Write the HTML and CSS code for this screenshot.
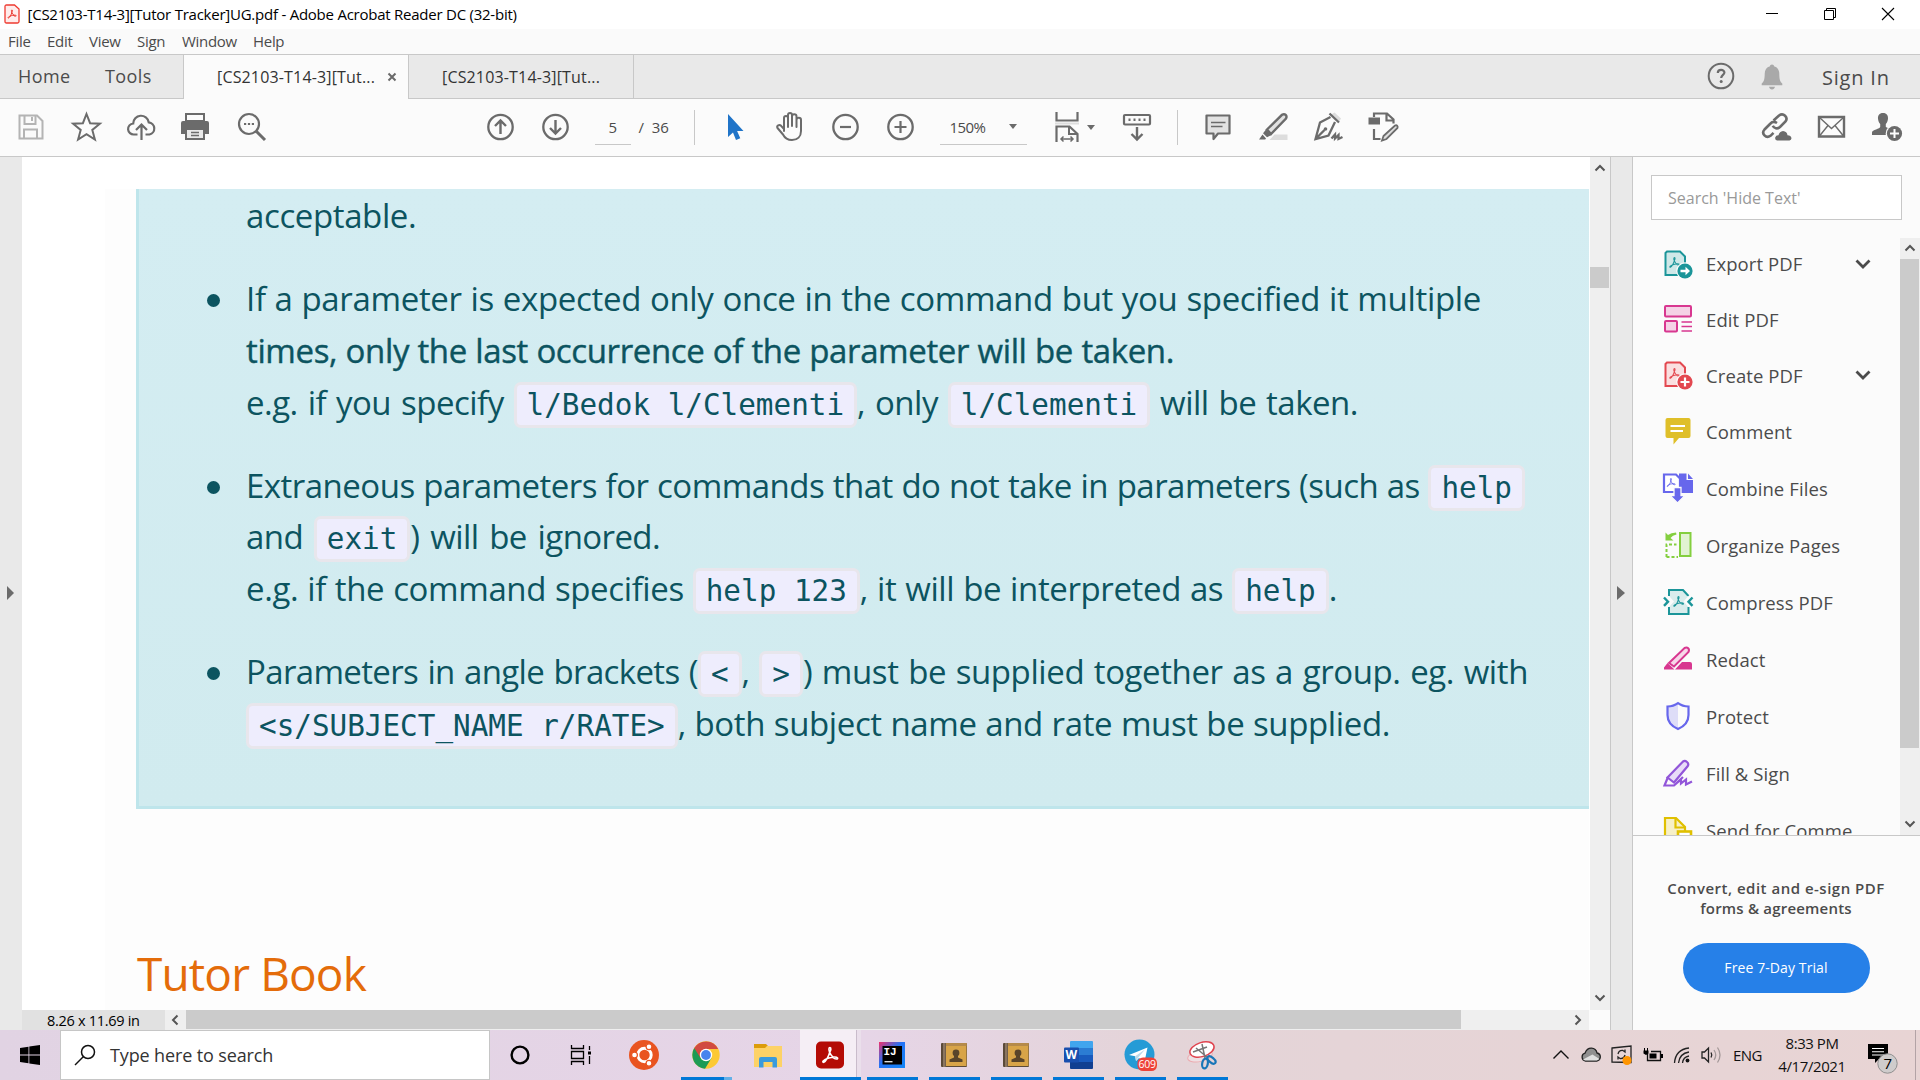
FILE: index.html
```
<!DOCTYPE html>
<html lang="en">
<head>
<meta charset="utf-8">
<title>[CS2103-T14-3][Tutor Tracker]UG.pdf - Adobe Acrobat Reader DC (32-bit)</title>
<link rel="stylesheet" href="styles.css">
</head>
<body>
<svg class="defs" width="0" height="0">
  <symbol id="trefoil" viewBox="0 0 20 20"><path d="M10 2.500c-1.500 0-1.200 2.600-.4 4.700.9 2.400 2.600 4.600 4.700 5.900M9.800 7C9 10.500 6 16.500 3.800 17.300c-2 .4-1.300-2.600 5-4.300 3-.8 7.700-1.500 8.700-.1.900 1.700-2.500 1.400-4.600-.4M10 2.500c1.400.3.900 3-.2 4.500" fill="none" stroke="currentColor" stroke-width="1.600" stroke-linejoin="round"/></symbol>
  <symbol id="up" viewBox="0 0 14 14"><path d="M2.500 9.500L7 5l4.500 4.500" fill="none" stroke="#555" stroke-width="2"/></symbol>
  <symbol id="book" viewBox="0 0 28 28"><rect x="1" y="2" width="26" height="24" rx="1" fill="#5b4a38"/><rect x="6" y="2" width="20.500" height="23" fill="#d8a448"/><path d="M6 2h20.500v3H6z" fill="#b58a4a"/><path d="M3 2h2.500v24H3z" fill="#8a7560"/><circle cx="16" cy="12" r="3.400" fill="#59442a"/><path d="M9.500 21v-2.500l4.500-2v-3h4v3l4.500 2V21z" fill="#59442a"/></symbol>
</svg>

<header class="titlebar">
  <svg class="app-icon" width="16" height="20" viewBox="0 0 16 20"><path d="M2.500 1h8L15 5v12.500q0 1.500-1.500 1.500h-11Q1 19 1 17.500v-15Q1 1 2.500 1z" fill="#ffeceb" stroke="#ee3a30" stroke-width="1.300"/><use href="#trefoil" x="2.500" y="4.500" width="11" height="11" color="#e8281e"/></svg>
  <span class="title">[CS2103-T14-3][Tutor Tracker]UG.pdf - Adobe Acrobat Reader DC (32-bit)</span>
  <div class="window-buttons">
    <svg width="14" height="14" viewBox="0 0 14 14"><path d="M1 6.500h12" stroke="#000" stroke-width="1"/></svg>
    <svg width="14" height="14" viewBox="0 0 14 14"><path d="M1.500 3.500h9v9h-9zM3.500 3.500v-2h9v9h-2" fill="none" stroke="#000"/></svg>
    <svg width="14" height="14" viewBox="0 0 14 14"><path d="M1 1l12 12M13 1L1 13" stroke="#000" stroke-width="1.100"/></svg>
  </div>
</header>

<nav class="menubar"><span class="m-file">File</span><span class="m-edit">Edit</span><span class="m-view">View</span><span class="m-sign">Sign</span><span class="m-window">Window</span><span>Help</span></nav>

<div class="tabbar">
  <div class="home-tabs"><span class="home">Home</span><span>Tools</span></div>
  <div class="tab active"><span>[CS2103-T14-3][Tut...</span><svg width="10" height="10" viewBox="0 0 10 10"><path d="M1.500 1.500l7 7M8.500 1.500l-7 7" stroke="#6a6a6a" stroke-width="2"/></svg></div>
  <div class="tab"><span>[CS2103-T14-3][Tut...</span></div>
  <div class="account">
    <svg width="28" height="28" viewBox="0 0 28 28"><circle cx="14" cy="14" r="12.300" fill="none" stroke="#6b6b6b" stroke-width="2"/><path d="M10.800 11c0-4 6.600-4 6.600-.4 0 2.300-3.200 2.500-3.200 5.400" fill="none" stroke="#6b6b6b" stroke-width="2.200"/><circle cx="14.200" cy="19.600" r="1.500" fill="#6b6b6b"/></svg>
    <svg class="bell" width="22" height="26" viewBox="0 0 22 26"><path d="M11 .5c1.400 0 2 .8 2 1.800 3.600 1 5.300 3.800 5.300 7.700 0 5 .7 7.500 3 9.500v1.800H.7v-1.800c2.300-2 3-4.500 3-9.500 0-3.900 1.700-6.700 5.300-7.700 0-1 .6-1.800 2-1.800zM8 22.800h6c-.3 1.600-1.500 2.600-3 2.600s-2.700-1-3-2.600z" fill="#a9a9a9"/></svg>
    <span class="signin">Sign In</span>
  </div>
</div>

<div class="toolbar">
  <div class="group files">
    <svg width="30" height="30" viewBox="0 0 30 30" fill="none" stroke="#b4b4b4" stroke-width="2"><path d="M3 3.500h17.500l5.500 5.500v17.500H3z"/><path d="M8 3.500v8.500h11V3.500M15.500 5v4M7.500 26v-8.500h13V26" /></svg>
    <svg width="32" height="32" viewBox="0 0 32 32" fill="none" stroke="#6b6b6b" stroke-width="2"><path d="M16 3l3.600 9.200 9.800.5-7.600 6.200 2.600 9.600L16 23.100l-8.400 5.400 2.600-9.600-7.600-6.200 9.800-.5z"/></svg>
    <svg width="32" height="32" viewBox="0 0 32 32" fill="none" stroke="#6b6b6b" stroke-width="2.200"><path d="M12 23.500H8.500a5.500 5.500 0 0 1-.8-11 7.800 7.800 0 0 1 15.500-1.200 6.200 6.200 0 0 1 .8 12.200h-4M16 29V14.500M10.500 19l5.500-5.500 5.500 5.500"/></svg>
    <svg width="32" height="32" viewBox="1.500 0 32 32"><path d="M7 3h18v7H7z" fill="none" stroke="#6b6b6b" stroke-width="2"/><path d="M4 10h24q2 0 2 2v11h-4v-5H6v5H2V12q0-2 2-2z" fill="#6b6b6b"/><path d="M7 18h18v10H7z" fill="#e9e9e9" stroke="#6b6b6b" stroke-width="2"/><path d="M12 21.500h8M12 24.500h8" stroke="#6b6b6b" stroke-width="1.300"/></svg>
    <svg width="32" height="32" viewBox="0 0 32 32" fill="none" stroke="#6b6b6b"><circle cx="13.500" cy="13" r="10" stroke-width="2.200"/><path d="M21 20.500l8.500 8.500" stroke-width="3"/><path d="M8.500 13h2.200m1.700 0h2.200m1.700 0h2.200" stroke-width="2.200"/></svg>
  </div>
  <div class="group pages">
    <svg width="28" height="28" viewBox="0 0 28 28" fill="none" stroke="#6b6b6b" stroke-width="2.300"><circle cx="14" cy="14" r="12.200"/><path d="M14 21V8.500M8.500 13L14 7.500l5.500 5.500" stroke-width="2.400"/></svg>
    <svg width="28" height="28" viewBox="0 0 28 28" fill="none" stroke="#6b6b6b" stroke-width="2.300"><circle cx="14" cy="14" r="12.200"/><path d="M14 7v12.500M8.500 15l5.500 5.500 5.500-5.500" stroke-width="2.400"/></svg>
  </div>
  <span class="page-input">5</span><span class="page-total"><span>/</span><span>36</span></span>
  <i class="rule"></i>
  <div class="group view">
    <svg width="32" height="32" viewBox="0 0 32 32"><path d="M8.500 3v23l5-4.500 3 7.500 4.300-1.700-3.200-7.300H24z" fill="#2074c8"/></svg>
    <svg width="32" height="32" viewBox="0 0 32 32" fill="none" stroke="#6b6b6b" stroke-width="2" stroke-linejoin="round" stroke-linecap="round"><path d="M9.500 20V7a2 2 0 0 1 4 0V16M13.500 7V4a2 2 0 0 1 4 0v11M17.500 5.500a2 2 0 0 1 4.500 0V16M22 9a2 2 0 0 1 4.500 0v11c0 5.500-3.500 9-9 9-4.500 0-7-1.500-9-5.500L3 17c-1.200-2.500 1.800-4 3.600-2.200L9.500 18"/></svg>
    <svg width="28" height="28" viewBox="0 0 28 28" fill="none" stroke="#6b6b6b" stroke-width="2.300"><circle cx="14" cy="14" r="12.200"/><path d="M8.500 14h11" stroke-width="2.200"/></svg>
    <svg width="28" height="28" viewBox="0 0 28 28" fill="none" stroke="#6b6b6b" stroke-width="2.300"><circle cx="14" cy="14" r="12.200"/><path d="M8 14h12M14 8v12" stroke-width="2.200"/></svg>
  </div>
  <div class="zoom"><span>150%</span><svg width="8" height="5" viewBox="0 0 8 5"><path d="M0 0h8L4 5z" fill="#6b6b6b"/></svg></div>
  <svg class="fit" width="24" height="32" viewBox="0 0 24 32"><path d="M1.500 1v8.500h21V1" fill="none" stroke="#6b6b6b" stroke-width="2.200"/><path d="M0 12.500h24" stroke="#ddd" stroke-width="2"/><path d="M1.500 31V15.500h13l8 7.500v8" fill="none" stroke="#6b6b6b" stroke-width="2.200"/><path d="M14 15v8h8" fill="none" stroke="#6b6b6b" stroke-width="2"/><path d="M6 28h12M8.500 25.500L6 28l2.500 2.500M15.500 25.500L18 28l-2.500 2.500" fill="none" stroke="#6b6b6b" stroke-width="1.500"/></svg>
  <svg class="fit-caret" width="8" height="5" viewBox="0 0 8 5"><path d="M0 0h8L4 5z" fill="#6b6b6b"/></svg>
  <svg class="scrolling" width="30" height="32" viewBox="0 0 30 32" fill="none" stroke="#6b6b6b"><rect x="2" y="4" width="26" height="9.500" rx="1" stroke-width="2.200"/><path d="M6.500 8.800h17" stroke-width="2.600" stroke-dasharray="2 3"/><path d="M15 16v12M9.500 23l5.500 5.500 5.500-5.500" stroke-width="2.400"/></svg>
  <i class="rule"></i>
  <div class="group markup">
    <svg width="32" height="32" viewBox="0 0 32 32"><path d="M4 4.500h23v18H15.500L11 28v-5.500H4z" fill="#e2e2e2" stroke="#6b6b6b" stroke-width="2.200" stroke-linejoin="round"/><path d="M8.500 11.500H23M8.500 15.500H20" stroke="#6b6b6b" stroke-width="1.400"/></svg>
    <svg width="32" height="32" viewBox="0 0 32 32"><path d="M17 23.500h13V29H12z" fill="#ddd"/><path d="M9.500 18.500L24.500 3.800c3-1.800 5.500 1 4 3.700L13.500 23z" fill="#e2e2e2" stroke="#6b6b6b" stroke-width="2.400"/><path d="M8.500 18.500l5.500 5.500-4.500 2.300-4-4zM5 23.500l3.500 4-.8 1H1.500z" fill="#6b6b6b"/></svg>
    <svg width="32" height="32" viewBox="0 0 32 32" fill="none" stroke="#6b6b6b" stroke-width="2.300"><path d="M18 4l4-2.500 6.500 6-2.500 4z" fill="#ddd" stroke="none"/><path d="M17 2.500l9.500 9M18 6L7.500 11.500 3 28l13-3.500L22.500 11M3 28l9-9"/><circle cx="13" cy="18" r="1.800" fill="#6b6b6b" stroke="none"/><path d="M19 27.500l3.500-4v4l3.500-3.500v4l4-2"/></svg>
    <svg width="32" height="32" viewBox="0 0 32 32" fill="none" stroke="#6b6b6b" stroke-width="2.200"><path d="M6.500 6V2.500h13l6.500 6v4M19 3v6.500h7M6.500 18v10H13"/><path d="M1 6.500h11.500v7H1z" fill="#6b6b6b" stroke="none"/><path d="M16 25l11.500-10.500c2-.8 3.200.8 2.500 2.500L19 28l-4.500 1.500z" fill="#ddd" stroke-width="1.800"/></svg>
  </div>
  <div class="group share">
    <svg width="32" height="32" viewBox="0 0 32 32" fill="none" stroke="#6b6b6b" stroke-width="2.600"><path d="M13 9.500l5.500-5c4.500-3.200 9.500 2 6.500 6L19.500 16c-2.700 2.400-6 1.300-7.200-1.300M16.500 12c-2.700-1.700-4.700-1.400-6.500.5l-6 6c-3.600 4 1.500 9.500 6 6.300l3-3"/><path d="M16.500 29.500q-2.200-.5-1.800-3 .8-2.500 3.300-2.300 1-4 4.500-4.300 4 .3 4.500 4.300 3.500 0 4 3-.2 2-2 2.300z" fill="#6b6b6b" stroke="none"/></svg>
    <svg width="28" height="24" viewBox="0 0 28 24" fill="none" stroke="#6b6b6b"><path d="M1.500 2h25v19.500h-25z" stroke-width="2.400"/><path d="M2 2.500l12 11 12-11M2 21l8.500-10.500M26 21l-8.500-10.500" stroke-width="1.400"/></svg>
    <svg width="32" height="32" viewBox="0 0 32 32"><path d="M12.500 2c3.800 0 5.200 2.600 5 5.800-.2 2.300-1 4-2.200 5.200v3l4 1.800L15 24H1.500v-2.500c0-2.500 8.200-4 8.200-5.500v-3C8.500 11.800 7.700 10.100 7.500 7.800c-.2-3.200 1.200-5.800 5-5.800z" fill="#6b6b6b"/><circle cx="24" cy="22.500" r="8.800" fill="#fbfbfb"/><circle cx="24" cy="22.500" r="7.600" fill="#6b6b6b"/><path d="M19.500 22.500h9M24 18v9" stroke="#fff" stroke-width="2"/></svg>
  </div>
</div>

<div class="workspace">
  <div class="gutter"><svg width="7" height="14" viewBox="0 0 7 14"><path d="M0 0l7 7-7 7z" fill="#6b6b6b"/></svg></div>
  <main class="viewer">
    <div class="page-row">
      <div class="canvas">
        <article class="page">
          <section class="callout">
            <p class="line w-accept">acceptable.</p>
            <ul>
              <li>
                <p class="line w1">If a parameter is expected only once in the command but you specified it multiple</p>
                <p class="line strong w2">times, only the last occurrence of the parameter will be taken.</p>
                <p class="line w3">e.g. if you specify <code>l/Bedok l/Clementi</code>, only <code>l/Clementi</code> will be taken.</p>
              </li>
              <li>
                <p class="line w4">Extraneous parameters for commands that do not take in parameters (such as <code>help</code></p>
                <p class="line w5">and <code>exit</code>) will be ignored.</p>
                <p class="line w6">e.g. if the command specifies <code>help 123</code>, it will be interpreted as <code>help</code>.</p>
              </li>
              <li>
                <p class="line w7"><span class="tight">Parameters in angle brackets (</span><code>&lt;</code>, <code>&gt;</code>) must be supplied together as a group. eg. with</p>
                <p class="line w8"><code>&lt;s/SUBJECT_NAME r/RATE&gt;</code>, both subject name and rate must be supplied.</p>
              </li>
            </ul>
          </section>
          <h1>Tutor Book</h1>
        </article>
      </div>
      <div class="vscroll">
        <svg width="14" height="14"><use href="#up"/></svg>
        <i class="vthumb"></i>
        <svg class="flip" width="14" height="14"><use href="#up"/></svg>
      </div>
    </div>
    <div class="statusbar">
      <span class="size">8.26 x 11.69 in</span>
      <span class="step"><svg class="left" width="14" height="14"><use href="#up"/></svg></span>
      <i class="hthumb"></i>
      <span class="step last"><svg class="right" width="14" height="14"><use href="#up"/></svg></span>
      <i class="corner"></i>
    </div>
  </main>
  <div class="splitter"><svg width="8" height="14" viewBox="0 0 8 14"><path d="M0 0l8 7-8 7z" fill="#6b6b6b"/></svg></div>
  <aside class="tools">
    <div class="search">Search 'Hide Text'</div>
    <div class="tool-area">
      <ul class="tool-list">
        <li class="t0"><svg width="30" height="30" viewBox="0 0 30 30"><path d="M4 2.500h13l5 5V26H2.500V4z" fill="#cfe8e8" stroke="#1b9599" stroke-width="2"/><use href="#trefoil" x="5" y="7" width="13" height="13" color="#1b9599"/><circle cx="22" cy="22" r="8.700" fill="#fbfbfb"/><circle cx="22" cy="22" r="7.600" fill="#1b9599"/><path d="M17.500 20.700h5v-3l4.500 4.300-4.500 4.300v-3h-5z" fill="#fff"/></svg><span>Export PDF</span><svg class="chev" width="16" height="12" viewBox="0 0 16 12"><path d="M1.500 2.500L8 9l6.500-6.500" fill="none" stroke="#4b4b4b" stroke-width="2.800"/></svg></li>
        <li class="t1"><svg width="30" height="30" viewBox="0 0 30 30" fill="#f5d2e6" stroke="#d83790" stroke-width="2"><rect x="2" y="2" width="26" height="10.500" rx="1"/><rect x="2" y="17" width="12" height="10.500" rx="1"/><path d="M18.500 18H29m-10.500 4.500H29M18.500 27H29" stroke-width="1.300"/></svg><span>Edit PDF</span></li>
        <li class="t2"><svg width="30" height="30" viewBox="0 0 30 30"><path d="M4 2.500h13l5 5V26H2.500V4z" fill="#fadfe0" stroke="#e34850" stroke-width="2"/><use href="#trefoil" x="5" y="7" width="13" height="13" color="#e34850"/><circle cx="22" cy="22" r="8.700" fill="#fbfbfb"/><circle cx="22" cy="22" r="7.600" fill="#e34850"/><path d="M17.500 22h9M22 17.500v9" stroke="#fff" stroke-width="2.200"/></svg><span>Create PDF</span><svg class="chev" width="16" height="12" viewBox="0 0 16 12"><path d="M1.500 2.500L8 9l6.500-6.500" fill="none" stroke="#4b4b4b" stroke-width="2.800"/></svg></li>
        <li class="t3"><svg width="30" height="30" viewBox="0 0 30 30"><path d="M4.500 2h21q2 0 2 2v16q0 2-2 2H16l-5.500 6.500V22h-6q-2 0-2-2V4q0-2 2-2z" fill="#dfbf29"/><path d="M7.500 10H22M7.500 15H20" stroke="#fff" stroke-width="1.800"/></svg><span>Comment</span></li>
        <li class="t4"><svg width="32" height="32" viewBox="0 0 32 32"><path d="M2 2.500h12l4 4V20H2z" fill="#fff" stroke="#6767ec" stroke-width="2.200"/><use href="#trefoil" x="3.500" y="5" width="11" height="11" color="#6767ec"/><path d="M17 1.500h7.500V8H31v13H17z" fill="#6767ec"/><path d="M26 1.500V7h5z" fill="#6767ec"/><path d="M12 15.500h7v8h4L15.500 31 8 23.500h4z" fill="#6767ec" stroke="#fbfbfb" stroke-width="1.300"/></svg><span>Combine Files</span></li>
        <li class="t5"><svg width="30" height="30" viewBox="0 0 30 30" fill="none" stroke="#84cf3f" stroke-width="2"><rect x="17" y="3" width="10.500" height="23" fill="#e1f3d2"/><path d="M3.500 27V14.500h10M3.500 27H15" stroke-dasharray="3 2"/><path d="M2.500 2.500v8h8l-3-2.500q2-3 6-3.500l-.5-2q-5 .3-8 2.500z" fill="#84cf3f" stroke="none"/></svg><span>Organize Pages</span></li>
        <li class="t6"><svg width="30" height="30" viewBox="0 0 30 30" fill="none" stroke="#1b9599" stroke-width="2"><path d="M6 9V3h14l5.500 6M25.500 20v7H6v-7" fill="#d9ecec"/><path d="M6 9l5 5.500L6 20h19.500l-5-5.500 5-5.500z" fill="#d9ecec" stroke="none"/><path d="M1 10.500l4 4.200-4 4.200M29.500 10.500l-4 4.200 4 4.200" stroke-width="2.400"/><use href="#trefoil" x="9" y="8" width="13" height="13" color="#1b9599"/></svg><span>Compress PDF</span></li>
        <li class="t7"><svg width="30" height="30" viewBox="0 0 30 30"><path d="M6 19L21.500 4c3-1.500 5.500 1 4 4L11 22.500z" fill="#f7d7e9" stroke="#d83790" stroke-width="2"/><path d="M4.500 19l7 6.500H1v-2zM19 18h8q2 0 2 2v5.500H12z" fill="#d83790"/></svg><span>Redact</span></li>
        <li class="t8"><svg width="30" height="30" viewBox="0 0 30 30"><path d="M15 2v26C8 25 4.500 21 4.500 14V5.500Q10 5.800 15 2z" fill="#deddf8"/><path d="M15 2.200q4.500 3.300 10.500 3.300V14c0 7-3.500 11-10.500 14C8 25 4.500 21 4.500 14V5.500Q10.500 5.500 15 2.200z" fill="none" stroke="#6767ec" stroke-width="2.200"/></svg><span>Protect</span></li>
        <li class="t9"><svg width="30" height="30" viewBox="0 0 30 30" fill="none" stroke="#9256d9" stroke-width="2.200"><path d="M4.500 19.500L20 3.500c2.500-1.800 6.500 1.700 4.800 4.500L11 24.500z" fill="#e9dcf8"/><path d="M5 19L1.500 27.500H11L20 19M11 27.500l7-6v4l5-4v5l6-3"/></svg><span>Fill &amp; Sign</span></li>
        <li class="t10"><svg width="30" height="30" viewBox="0 0 30 30"><path d="M2 28V3h11l9 9v16z" fill="#f7f0c8" stroke="#e0c000" stroke-width="2.200"/><path d="M12.500 3v9.500H22" fill="none" stroke="#e0c000" stroke-width="2.200"/><rect x="15" y="16.500" width="13" height="12" fill="#fff" stroke="#e0c000" stroke-width="2.600"/></svg><span>Send for Comme</span></li>
      </ul>
      <div class="tscroll">
        <svg width="14" height="14"><use href="#up"/></svg>
        <i class="tthumb"></i>
        <svg class="flip" width="14" height="14"><use href="#up"/></svg>
      </div>
    </div>
    <div class="promo">
      <p>Convert, edit and e-sign PDF</p>
      <p class="second">forms &amp; agreements</p>
      <button type="button">Free 7-Day Trial</button>
    </div>
  </aside>
</div>

<footer class="taskbar">
  <span class="start"><svg width="20" height="20" viewBox="0 0 20 20"><path d="M0 3l8.500-1.200v7.700H0zM9.300 1.600L20 0v9.500H9.300zM0 10.400h8.500v7.800L0 17zM9.300 10.400H20V20L9.300 18.400z"/></svg></span>
  <div class="tb-search"><svg width="22" height="22" viewBox="0 0 22 22" fill="none" stroke="#111" stroke-width="1.500"><circle cx="14" cy="8" r="6.500"/><path d="M9.500 12.500L1 21"/></svg><span>Type here to search</span></div>
  <div class="apps">
    <span class="app"><svg width="22" height="22" viewBox="0 0 22 22"><circle cx="11" cy="11" r="8.400" fill="none" stroke="#000" stroke-width="2.400"/></svg></span>
    <span class="app"><svg width="22" height="20" viewBox="0 0 22 20" fill="none" stroke="#000"><path d="M1.500 0v3.500h12V0M1.500 20v-3.500h12V20M1.500 6.500h12v7h-12zM19.500 1v4M19.500 11v8" stroke-width="1.300"/><path d="M18 6.500h3v3h-3z" fill="#000" stroke="none"/></svg></span>
    <span class="app"><svg width="32" height="32" viewBox="0 0 32 32"><circle cx="16" cy="16" r="15" fill="#e95420"/><circle cx="16.500" cy="16" r="6.700" fill="none" stroke="#fff" stroke-width="3"/><g fill="#fff" stroke="#e95420" stroke-width="1.200"><circle cx="6.500" cy="16" r="2.900"/><circle cx="21" cy="7.700" r="2.900"/><circle cx="21" cy="24.300" r="2.900"/></g></svg></span>
    <span class="app running partial"><svg width="28" height="28" viewBox="0 0 28 28"><circle cx="14" cy="14" r="13.700" fill="#fcc934"/><path d="M2.200 7.100A13.700 13.700 0 0 0 13 27.700L19.500 17 14 14z" fill="#1c9b55"/><path d="M2.200 7.100A13.700 13.700 0 0 1 26.200 8H14L8.500 17z" fill="#d14b41"/><circle cx="14" cy="14" r="6.200" fill="#fff"/><circle cx="14" cy="14" r="4.900" fill="#4684ee"/></svg></span>
    <span class="app"><svg width="28" height="26" viewBox="0 0 28 26"><path d="M0 2h12l2 2v3H0z" fill="#dc9c0a"/><path d="M0 6h11l2-2h15v21H0z" fill="#fdd266"/><path d="M5 25.500V17q0-2 2-2h14q2 0 2 2v8.500h-4.500V20h-9v5.500z" fill="#3a9bdc"/></svg></span>
    <span class="app current"><svg width="28" height="28" viewBox="0 0 28 28"><rect x="0" y="0.500" width="28" height="27" rx="5" fill="#b40b05"/><use href="#trefoil" x="4" y="4" width="20" height="20" color="#fff"/></svg></span>
    <span class="app running"><svg width="28" height="28" viewBox="0 0 28 28"><defs><linearGradient id="ij" x1="0" y1="0" x2="1" y2="1"><stop offset="0" stop-color="#f0316b"/><stop offset=".45" stop-color="#2472f5"/><stop offset="1" stop-color="#1186f7"/></linearGradient></defs><path d="M1 1h26v26H1z" fill="url(#ij)"/><path d="M4.500 5H24v18.500H4.500z"/><text x="5.500" y="14" class="ij-text">IJ</text><path d="M6.500 20.700h8" stroke="#ddd" stroke-width="1.400"/></svg></span>
    <span class="app running"><svg width="28" height="28"><use href="#book"/></svg></span>
    <span class="app running"><svg width="28" height="28"><use href="#book"/></svg></span>
    <span class="app running"><svg width="30" height="28" viewBox="0 0 30 28"><path d="M8 0h21q1 0 1 1v6H7V1q0-1 1-1z" fill="#41a5ee"/><path d="M7 7h23v7H7z" fill="#2b7cd3"/><path d="M7 14h23v7H7z" fill="#185abd"/><path d="M7 21h23v6q0 1-1 1H8q-1 0-1-1z" fill="#103f91"/><rect x="1" y="6.500" width="15" height="15" rx="1" fill="#184fae"/><text x="2.500" y="18" class="word-text">W</text></svg></span>
    <span class="app running"><svg width="34" height="32" viewBox="0 0 34 32"><circle cx="16.500" cy="15.500" r="15" fill="#259bd6"/><path d="M6 16L24.500 8.500l-3 14.500-5.500-4-3 3-.8-4.700z" fill="#fff"/><path d="M12.200 17.300L22 10.500l-6.500 7.700-2.500 3.500z" fill="#bcd9ea"/><rect x="14.500" y="18.500" width="19.500" height="13.500" rx="5.500" fill="#ee4339"/><text x="15.500" y="29" class="badge-text">609</text></svg></span>
    <span class="app running"><svg width="30" height="30" viewBox="0 0 30 30"><ellipse cx="13" cy="16" rx="12.500" ry="5.500" transform="rotate(-12 13 16)" fill="#eee0e3" stroke="#ecabb0"/><ellipse cx="15" cy="9.500" rx="12.500" ry="7" transform="rotate(-18 15 9.500)" fill="#fff" stroke="#e0444f" stroke-width="1.500"/><path d="M6 12l14-5M15 4l3 14M9 8l12 10" stroke="#777" stroke-width="1.500"/><g fill="none" stroke="#1876b8" stroke-width="2.200"><ellipse cx="18" cy="23.500" rx="2.800" ry="5" transform="rotate(10 18 23.500)"/><ellipse cx="24.500" cy="20" rx="2.500" ry="4.800" transform="rotate(-50 24.500 20)"/></g></svg></span>
  </div>
  <div class="tray">
    <svg width="18" height="10" viewBox="0 0 18 10"><path d="M1.500 8.500L9 1l7.500 7.500" fill="none" stroke="#111" stroke-width="1.400"/></svg>
    <svg width="20" height="16" viewBox="0 0 20 16"><path d="M4.500 14a4 4 0 0 1-.5-7.800Q6 1 10.500 1.200 15 1.500 16 6q3.500.8 3.300 4.200-.4 3.300-3.500 3.800z" fill="#909090" stroke="#222" stroke-width="1.300"/><path d="M2 12.500l9.500-5 7 4.500-2.500 1.500H4z" fill="#e0e0e0"/></svg>
    <svg width="22" height="20" viewBox="0 0 22 20"><path d="M1 3l19-2v16.500L1 17z" fill="none" stroke="#222" stroke-width="1.300"/><path d="M7 9q1-4 5-3.500l2 1.500V4.500M14 10q-1 4-5 3.500L7 12v2.500" fill="none" stroke="#222" stroke-width="1.300"/><circle cx="16" cy="15.500" r="4.500" fill="#fe9400"/></svg>
    <svg width="20" height="16" viewBox="0 0 20 16"><path d="M4.500 6.500V13.500h13v-9H8" fill="none" stroke="#111" stroke-width="1.300"/><path d="M6.500 6.500h7v5h-7zM18 7h2v4h-2z"/><path d="M.5 3.500h5v3L3 8 .5 6.500zM1 1h1v3H1zM4 1h1v3H4z"/></svg>
    <svg width="18" height="18" viewBox="0 0 18 18" fill="none" stroke="#222" stroke-width="1.300"><path d="M1.500 17Q2.500 3.500 16 2M5.500 17Q6.500 7.500 16 6M9.500 17q.6-6 6.500-7"/><circle cx="14.500" cy="14.500" r="1.900" fill="#111" stroke="none"/></svg>
    <svg width="20" height="18" viewBox="0 0 20 18" fill="none" stroke="#222" stroke-width="1.300"><path d="M1 6h2.500L7.500 2v14l-4-4H1z"/><path d="M10 6.500q1.600 2.500 0 5"/><path d="M13 4q3.500 5 0 10M16.500 1.500q5 7.500 0 15" stroke="#a39898"/></svg>
    <span class="lang">ENG</span>
    <span class="clock"><span>8:33 PM</span><span class="date">4/17/2021</span></span>
    <svg class="notify" width="32" height="32" viewBox="0 0 32 32"><path d="M1 2h20v15h-9l-4 4v-4H1z"/><path d="M5 6.500h12M5 9.800h12M5 13h12" stroke="#fff" stroke-width="1.100"/><circle cx="20.500" cy="21.500" r="9.700" fill="#cfcccc" stroke="#8f8f8f"/><text x="16.500" y="27" class="count">7</text></svg>
    <i class="desktop"></i>
  </div>
</footer>
</body>
</html>
```
FILE: styles.css
```
* { box-sizing: border-box; }
body { margin: 0; width: 1920px; height: 1080px; overflow: hidden; display: flex; flex-direction: column; background: #fff; font-family: "Open Sans", "Noto Sans", sans-serif; color: #4b4b4b; white-space: nowrap; }
p, ul, h1 { margin: 0; padding: 0; }
ul { list-style: none; }
svg { display: block; flex: none; }
i { display: block; flex: none; }
.defs { position: absolute; }

.titlebar { height: 29px; flex: none; display: flex; align-items: center; padding: 0 25px 1px 4px; color: #000; font-size: 15px; letter-spacing: -0.24px; }
.app-icon { margin-right: 7.500px; }
.window-buttons { margin-left: auto; display: flex; gap: 44px; }

.menubar { height: 25px; flex: none; display: flex; align-items: center; padding: 0 0 2px 8px; background: #fafafa; font-size: 15px; letter-spacing: -0.3px; }
.menubar span { width: 36px; flex: none; }
.menubar .m-file { width: 39px; }
.menubar .m-edit { width: 42px; }
.menubar .m-view { width: 48px; }
.menubar .m-sign { width: 45px; }
.menubar .m-window { width: 71px; }

.tabbar { height: 45px; flex: none; display: flex; background: #e9e9e9; border-top: 1px solid #c8c8c8; }
.home-tabs { width: 183px; display: flex; align-items: center; padding-left: 18px; padding-bottom: 2px; font-size: 18px; letter-spacing: 0.4px; border-bottom: 1px solid #c8c8c8; }
.home { width: 87px; }
.tab { width: 225px; display: flex; align-items: center; padding-left: 33px; border: solid #c8c8c8; border-width: 0 1px 1px 0; font-size: 16px; letter-spacing: 0.16px; color: #333; }
.tab.active { width: 226px; border-left-width: 1px; border-bottom: 0; background: #fbfbfb; }
.tab svg { margin-left: 12px; margin-top: -1px; }
.account { flex: 1; display: flex; align-items: center; justify-content: flex-end; padding-right: 30px; border-bottom: 1px solid #c8c8c8; }
.account > svg { margin-top: -2px; }
.account .bell { margin: 0 39px 0 26px; }
.signin { width: 68px; font-size: 20px; font-weight: 500; letter-spacing: 0.8px; margin-top: 2px; }

.toolbar { height: 58px; flex: none; display: flex; align-items: center; background: #fbfbfb; border-bottom: 1px solid #c8c8c8; font-size: 15px; letter-spacing: -0.6px; padding: 0 0 1px 3.500px; }
.group { display: flex; align-items: center; }
.files > svg, .pages > svg, .view > svg, .markup > svg, .share > svg { width: 55px; }
.pages { margin-left: 194px; }
.page-input { width: 36px; height: 35px; margin-left: 12px; border-bottom: 1px solid #c8c8c8; text-align: center; line-height: 35px; }
.page-total { margin-left: 8px; width: 55px; display: flex; gap: 8px; letter-spacing: -0.2px; }
.rule { width: 1px; height: 35px; background: #c8c8c8; }
.view { margin-left: 13px; }
.zoom { width: 87px; height: 35px; margin-left: 12px; padding: 0 10px 0 10px; display: flex; align-items: center; justify-content: space-between; border-bottom: 1px solid #c8c8c8; }
.fit { margin-left: 28px; }
.fit-caret { margin-left: 8px; }
.scrolling { margin: 0 25px 0 27px; }
.markup { margin-left: 13px; }
.share { margin-left: auto; padding-right: 6px; }

.workspace { height: 873px; flex: none; display: flex; }
.gutter { width: 22px; background: #e9e9e9; display: flex; align-items: center; padding: 0 0 2px 7px; }
.viewer { width: 1588px; display: flex; flex-direction: column; }
.page-row { height: 853px; display: flex; }
.canvas { width: 1568px; padding: 32px 1px 0 83px; }
.page { height: 821px; padding-left: 31px; background: #fdfdfd; overflow: hidden; }
.callout { height: 620px; padding: 1px 0 0 107px; color: #0c5460; background: linear-gradient(#d4edf2, #d1ebef); border: solid #bee5eb; border-width: 0 0 3px 3px; font-size: 33px; }
.callout li { position: relative; margin-top: 31.500px; }
.callout li::before { content: ""; position: absolute; left: -39px; top: 21px; width: 13px; height: 13px; border-radius: 50%; background: #0c5460; }
.line { height: 51.700px; line-height: 51.700px; white-space: nowrap; text-align-last: justify; letter-spacing: -0.38px; }
.strong { -webkit-text-stroke: 0.4px #0c5460; }
.line code { display: inline-block; height: 46px; line-height: 40px; padding: 0 10px; border: 3px solid #e8e6ec; border-radius: 7px; background: #eeedfd; font-family: "DejaVu Sans Mono", monospace; font-size: 29.300px; letter-spacing: 0; vertical-align: 0; margin: -6px 0; }
.w-accept { width: 170px; }
.line.w1 { width: 1235px; letter-spacing: -0.33px; }
.w2 { width: 928px; }
.w3 { width: 1112px; letter-spacing: -0.5px; }
.line.w4 { width: 1279px; letter-spacing: -0.52px; }
.line.w5 { width: 414px; letter-spacing: -0.6px; }
.w6 { width: 1091px; }
.line.w7 { width: 1282px; letter-spacing: -0.4px; }
.tight { letter-spacing: -0.65px; }
.w8 { width: 1144px; }
h1 { margin-top: 131px; padding-left: 1px; color: #e46c0a; font-size: 46px; line-height: 67px; font-weight: 400; letter-spacing: -0.86px; }

.vscroll { width: 20px; background: #efefef; display: flex; flex-direction: column; align-items: center; padding: 4px 0 5px; }
.vthumb { width: 19px; height: 21px; margin: 92px 1px auto 0; background: #cbcbcb; }
.flip { transform: rotate(180deg); }
.left { transform: rotate(-90deg); }
.right { transform: rotate(90deg); }
.statusbar { height: 20px; display: flex; background: #efefef; }
.size { width: 143px; padding-left: 25px; background: #e1e1e1; color: #000; font-size: 14.500px; line-height: 21px; letter-spacing: -0.3px; }
.step { width: 21px; display: flex; align-items: center; justify-content: center; padding-right: 2px; }
.hthumb { width: 1275px; background: #cbcbcb; border-bottom: 1px solid #efefef; }
.last { margin-left: auto; }
.corner { width: 21px; background: #fbfbfb; }

.splitter { width: 23px; background: #e9e9e9; border: solid #c8c8c8; border-width: 0 1px; display: flex; align-items: center; padding: 0 0 2px 6px; }
.tools { width: 287px; background: #fbfbfb; display: flex; flex-direction: column; }
.search { width: 251px; height: 45px; flex: none; margin: 18px 0 18px 18px; padding-left: 16px; border: 1px solid #c8c8c8; background: #fff; color: #999; font-size: 16px; line-height: 44px; }
.tool-area { height: 598px; flex: none; display: flex; justify-content: space-between; border-bottom: 1px solid #c8c8c8; overflow: hidden; }
.tool-list { width: 240px; height: 597px; overflow: hidden; padding-left: 29px; }
.tool-list li { height: 57px; display: flex; align-items: center; font-size: 18.500px; letter-spacing: 0.1px; }
.tool-list .t0 { height: 51px; margin-bottom: 2px; }
.tool-list .t1, .tool-list .t2, .tool-list .t3 { height: 56.200px; }
.tool-list li > svg:first-child { width: 32px; margin-right: 12px; }
.tool-list .chev { margin-left: auto; margin-right: 2px; }
.tscroll { width: 20px; background: #efefef; display: flex; flex-direction: column; align-items: center; padding: 3px 0 4px; }
.tthumb { width: 19px; height: 489px; margin: 4px 1px auto 0; background: #cbcbcb; }
.promo { display: flex; flex-direction: column; align-items: center; padding: 42px 1px 0 0; font-size: 15px; font-weight: 600; line-height: 20px; letter-spacing: 0.5px; }
.promo .second { letter-spacing: 0.2px; }
.promo button { width: 187px; height: 50px; margin-top: 25px; padding-bottom: 3px; border: 0; border-radius: 25px; background: #2680e8; color: #fff; font: 14px "Open Sans", sans-serif; letter-spacing: 0.1px; }

.taskbar { height: 50px; flex: none; display: flex; background: linear-gradient(90deg, #e1d3e3, #e6d5e7 45%, #e4d4d8 60%, #e8d4d4); color: #111; }
.start { width: 60px; display: flex; align-items: center; justify-content: center; }
.tb-search { width: 430px; border: 1px solid #c6c6c6; background: #fff; display: flex; align-items: center; padding-left: 13px; font-size: 18px; letter-spacing: -0.13px; color: #333; }
.tb-search svg { margin-right: 14px; }
.apps { display: flex; }
.app { width: 62px; height: 50px; display: flex; align-items: center; justify-content: center; border-bottom: 3px solid transparent; padding-top: 2px; }
.app:first-child { width: 60px; }
.app:nth-child(2) { width: 61px; margin-right: 2px; }
.running { width: 51px; margin: 0 5.500px; border-bottom-color: #0078d7; }
.partial { border-image: linear-gradient(90deg, #0078d7 41px, #62b0e8 41px) 3; }
.current { width: 61px; margin: 0 0.500px; padding-right: 1px; border-bottom-color: #0078d7; background: linear-gradient(90deg, #f5eef5 56px, #c9bccb 56px 57px, #eadfeb 57px); }
.ij-text { font: bold 11px "Liberation Mono", monospace; fill: #fff; }
.word-text { font: bold 12px "Open Sans", sans-serif; fill: #fff; }
.badge-text { font: 10.500px "Open Sans", sans-serif; fill: #fff; letter-spacing: -0.2px; }
.tray { margin-left: auto; display: flex; align-items: center; gap: 10px; }
.tray > svg:first-child { margin-right: 1px; }
.lang { width: 28px; margin-left: 2px; font-size: 15px; letter-spacing: -0.6px; }
.clock { width: 80px; margin-left: 1px; display: flex; flex-direction: column; align-items: center; font-size: 15px; line-height: 23px; letter-spacing: -0.45px; }
.date { letter-spacing: -0.4px; }
.notify { margin: 6px 0 0 5px; }
.count { font: 15px "Open Sans", sans-serif; }
.desktop { width: 5px; height: 50px; margin-left: 6px; border-left: 1px solid #b3a3a6; }
```
